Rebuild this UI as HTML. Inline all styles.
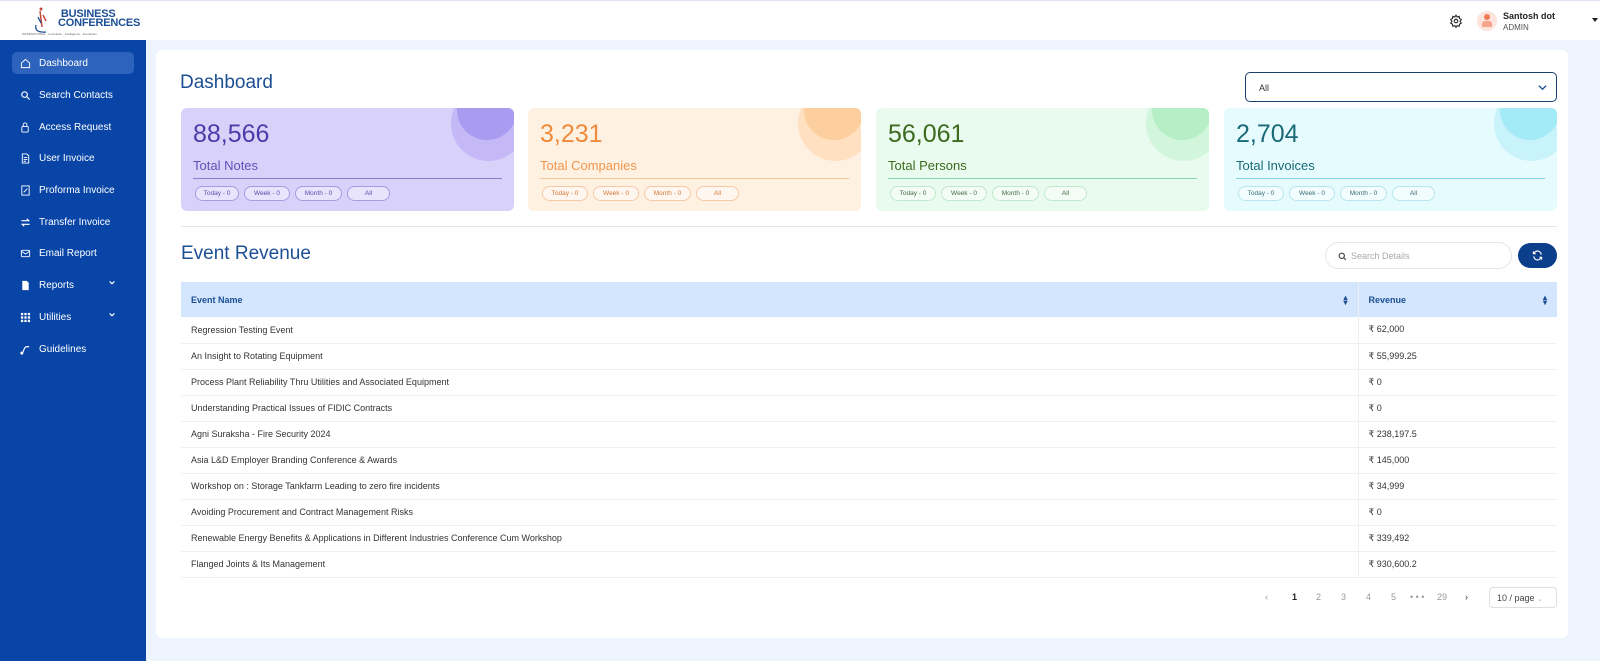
<!DOCTYPE html>
<html><head><meta charset="utf-8"><style>
*{box-sizing:border-box;margin:0;padding:0}
body{width:1600px;height:661px;overflow:hidden;font-family:"Liberation Sans",sans-serif;background:#eef4fd;position:relative}
.hdr{position:absolute;left:0;top:0;width:1600px;height:40px;background:#fff;border-top:1px solid #dde3ee}
.side{position:absolute;left:0;top:40px;width:146px;height:621px;background:#0845a6}
.nav{position:absolute;left:12px;width:122px;height:22px;color:#fff;font-size:10px;display:flex;align-items:center;padding-left:8px;border-radius:5px}
.nav svg{width:11px;height:11px;margin-right:8px;flex:none}
.nav.act{background:#2d63bd}
.nav .chev{position:absolute;right:10px;top:5px;width:8px;height:8px}
.card{position:absolute;left:156px;top:50px;width:1412px;height:588px;background:#fff;border-radius:6px}
.stat{position:absolute;top:108px;width:333px;height:103px;border-radius:6px;overflow:hidden}
.stat .num{position:absolute;left:12px;top:12px;font-size:25px}
.stat .lbl{position:absolute;left:12px;top:50px;font-size:13px}
.stat .ln{position:absolute;left:12px;right:12px;top:70px;height:1px}
.stat .circ{position:absolute;right:-12px;top:-22px;width:75px;height:75px;border-radius:50%}
.stat .circ2{position:absolute;right:-3px;top:-28px;width:60px;height:60px;border-radius:50%}
.pills{position:absolute;left:14px;top:78px;display:flex;gap:5px}
.pill{height:15px;border-radius:8px;font-size:6.5px;display:flex;align-items:center;justify-content:center;border:1px solid}
table{position:absolute;left:181px;top:282px;width:1376px;border-collapse:collapse;font-size:9px;color:#333}
th{background:#d4e6fd;height:35px;text-align:left;font-weight:bold;color:#1c4f94;padding-left:10px}
td{height:26px;padding-left:10px;border-bottom:1px solid #eef0f3}
td.r,th.r{border-left:1px solid #eef0f3}
.sort{float:right;margin-right:10px;color:#1c4f94;font-size:8px;line-height:5px}
</style></head><body>
<div class="hdr">
 <div style="position:absolute;left:28px;top:4px;width:30px;height:30px">
  <svg width="30" height="30" viewBox="0 0 30 30"><path d="M8 20 Q6 28 18 27" stroke="#1c4f94" stroke-width="1.3" fill="none"/><path d="M12 6 L14 22 M15 10 L18 16" stroke="#c24a3a" stroke-width="1.5" fill="none"/><circle cx="13" cy="4" r="1.5" fill="#c24a3a"/><path d="M10 12 L13 18" stroke="#1c4f94" stroke-width="1.3"/></svg>
 </div>
 <div style="position:absolute;left:58px;top:9px;font-weight:bold;color:#1c4f94;font-size:11px;line-height:9px;letter-spacing:-.2px">&nbsp;BUSINESS<br>CONFERENCES</div>
 <div style="position:absolute;left:22px;top:31px;font-size:3px;color:#666">INTERNATIONAL · Innovation · Intelligence · Interaction</div>
 <svg style="position:absolute;left:1449px;top:13px" width="14" height="14" viewBox="0 0 24 24" fill="none" stroke="#333" stroke-width="2"><circle cx="12" cy="12" r="3"/><path d="M12 2l2 3 3.5-1 .5 3.5 3 2-2 3 2 3-3 2-.5 3.5-3.5-1-2 3-2-3-3.5 1-.5-3.5-3-2 2-3-2-3 3-2 .5-3.5 3.5 1z"/></svg>
 <div style="position:absolute;left:1477px;top:10px;width:20px;height:20px;border-radius:50%;background:#fde4dc"></div>
 <div style="position:absolute;left:1484px;top:13px;width:6px;height:6px;border-radius:50%;background:#f07a55"></div>
 <div style="position:absolute;left:1482px;top:20px;width:10px;height:6px;border-radius:3px 3px 0 0;background:#f5a48a"></div>
 <div style="position:absolute;left:1503px;top:10px;font-size:9px;font-weight:bold;color:#222">Santosh dot</div>
 <div style="position:absolute;left:1503px;top:22px;font-size:8px;color:#555">ADMIN</div>
 <div style="position:absolute;left:1592px;top:17px;border:3px solid transparent;border-top:4px solid #222"></div>
</div>
<div class="side">
 <div class="nav act" style="top:12px"><svg viewBox="0 0 24 24" fill="none" stroke="#fff" stroke-width="2"><path d="M3 11l9-8 9 8v10H3z"/></svg>Dashboard</div>
 <div class="nav" style="top:44px"><svg viewBox="0 0 24 24" fill="none" stroke="#fff" stroke-width="2.5"><circle cx="10" cy="10" r="6"/><path d="M15 15l6 6"/></svg>Search Contacts</div>
 <div class="nav" style="top:76px"><svg viewBox="0 0 24 24" fill="none" stroke="#fff" stroke-width="2"><rect x="4" y="10" width="14" height="12" rx="2"/><path d="M7 10V6a4 4 0 018 0v4"/></svg>Access Request</div>
 <div class="nav" style="top:107px"><svg viewBox="0 0 24 24" fill="none" stroke="#fff" stroke-width="2"><path d="M5 2h10l4 4v16H5z M8 10h8M8 14h8M8 18h5"/></svg>User Invoice</div>
 <div class="nav" style="top:139px"><svg viewBox="0 0 24 24" fill="none" stroke="#fff" stroke-width="2"><rect x="4" y="2" width="16" height="20"/><path d="M8 16l8-8"/></svg>Proforma Invoice</div>
 <div class="nav" style="top:171px"><svg viewBox="0 0 24 24" fill="none" stroke="#fff" stroke-width="2.5"><path d="M3 8h16l-4-4M21 16H5l4 4"/></svg>Transfer Invoice</div>
 <div class="nav" style="top:202px"><svg viewBox="0 0 24 24" fill="none" stroke="#fff" stroke-width="2"><rect x="3" y="5" width="18" height="14" rx="2"/><path d="M3 7l9 6 9-6"/></svg>Email Report</div>
 <div class="nav" style="top:234px"><svg viewBox="0 0 24 24" fill="#fff"><path d="M5 2h10l4 4v16H5z"/></svg>Reports<svg class="chev" viewBox="0 0 10 10" fill="none" stroke="#fff" stroke-width="1.5"><path d="M2 3l3 3 3-3"/></svg></div>
 <div class="nav" style="top:266px"><svg viewBox="0 0 24 24" fill="#fff"><rect x="2" y="2" width="5" height="5"/><rect x="9.5" y="2" width="5" height="5"/><rect x="17" y="2" width="5" height="5"/><rect x="2" y="9.5" width="5" height="5"/><rect x="9.5" y="9.5" width="5" height="5"/><rect x="17" y="9.5" width="5" height="5"/><rect x="2" y="17" width="5" height="5"/><rect x="9.5" y="17" width="5" height="5"/><rect x="17" y="17" width="5" height="5"/></svg>Utilities<svg class="chev" viewBox="0 0 10 10" fill="none" stroke="#fff" stroke-width="1.5"><path d="M2 3l3 3 3-3"/></svg></div>
 <div class="nav" style="top:298px"><svg viewBox="0 0 24 24" fill="none" stroke="#fff" stroke-width="2.5"><path d="M4 20c4 0 4-14 10-14h6"/><circle cx="4" cy="20" r="2" fill="#fff"/></svg>Guidelines</div>
</div>
<div class="card"></div>
<div style="position:absolute;left:180px;top:72px;font-size:19px;color:#1c4f94">Dashboard</div>
<div style="position:absolute;left:1245px;top:72px;width:312px;height:30px;border:1px solid #1c3f6e;border-radius:5px;font-size:9px;color:#333;padding:10px 13px">All<svg style="position:absolute;right:9px;top:11px" width="9" height="7" viewBox="0 0 10 8" fill="none" stroke="#1c4f94" stroke-width="1.5"><path d="M1 2l4 4 4-4"/></svg></div>

<div class="stat" style="left:181px;background:#d8d2fb">
 <div class="circ" style="background:#c4b9f6"></div><div class="circ2" style="background:#a89bf0"></div>
 <div class="num" style="color:#4b3aa8">88,566</div><div class="lbl" style="color:#6152b8">Total Notes</div><div class="ln" style="background:#8a80c8"></div>
 <div class="pills" style="color:#5a4ea8"><div class="pill" style="width:44px;border-color:#a69ce0;background:#e8e4fd">Today - 0</div><div class="pill" style="width:46px;border-color:#a69ce0;background:#e8e4fd">Week - 0</div><div class="pill" style="width:47px;border-color:#a69ce0;background:#e8e4fd">Month - 0</div><div class="pill" style="width:43px;border-color:#a69ce0;background:#e8e4fd">All</div></div>
</div>
<div class="stat" style="left:528px;background:#fff1e2">
 <div class="circ" style="background:#ffe0c0"></div><div class="circ2" style="background:#fdcf9e"></div>
 <div class="num" style="color:#f08a3c">3,231</div><div class="lbl" style="color:#f0964f">Total Companies</div><div class="ln" style="background:#f5c49a"></div>
 <div class="pills" style="color:#d27a3c"><div class="pill" style="width:46px;border-color:#f5c9a5;background:#fff7ef">Today - 0</div><div class="pill" style="width:46px;border-color:#f5c9a5;background:#fff7ef">Week - 0</div><div class="pill" style="width:47px;border-color:#f5c9a5;background:#fff7ef">Month - 0</div><div class="pill" style="width:43px;border-color:#f5c9a5;background:#fff7ef">All</div></div>
</div>
<div class="stat" style="left:876px;background:#e9fbee">
 <div class="circ" style="background:#d2f6dc"></div><div class="circ2" style="background:#b6efc6"></div>
 <div class="num" style="color:#3d6a1e">56,061</div><div class="lbl" style="color:#3d6a1e">Total Persons</div><div class="ln" style="background:#88d6a8"></div>
 <div class="pills" style="color:#4a6a4a"><div class="pill" style="width:46px;border-color:#bfe9cc;background:#f3fdf6">Today - 0</div><div class="pill" style="width:46px;border-color:#bfe9cc;background:#f3fdf6">Week - 0</div><div class="pill" style="width:47px;border-color:#bfe9cc;background:#f3fdf6">Month - 0</div><div class="pill" style="width:43px;border-color:#bfe9cc;background:#f3fdf6">All</div></div>
</div>
<div class="stat" style="left:1224px;background:#e6fbfd">
 <div class="circ" style="background:#c9f3fa"></div><div class="circ2" style="background:#a3ebf7"></div>
 <div class="num" style="color:#1a6a78">2,704</div><div class="lbl" style="color:#1a6a78">Total Invoices</div><div class="ln" style="background:#7fd6e0"></div>
 <div class="pills" style="color:#3a6a78"><div class="pill" style="width:46px;border-color:#b6e7ef;background:#f2fdfe">Today - 0</div><div class="pill" style="width:46px;border-color:#b6e7ef;background:#f2fdfe">Week - 0</div><div class="pill" style="width:47px;border-color:#b6e7ef;background:#f2fdfe">Month - 0</div><div class="pill" style="width:43px;border-color:#b6e7ef;background:#f2fdfe">All</div></div>
</div>
<div style="position:absolute;left:181px;top:226px;width:1376px;height:1px;background:#e2e5ea"></div>
<div style="position:absolute;left:181px;top:243px;font-size:19px;color:#1c4f94">Event Revenue</div>
<div style="position:absolute;left:1325px;top:242px;width:187px;height:27px;border:1px solid #e3e6ea;border-radius:14px;font-size:9px;color:#aaa;padding:8px 0 0 25px">Search Details<svg style="position:absolute;left:12px;top:9px" width="9" height="9" viewBox="0 0 24 24" fill="none" stroke="#444" stroke-width="3"><circle cx="10" cy="10" r="7"/><path d="M15 15l6 6"/></svg></div>
<div style="position:absolute;left:1518px;top:243px;width:39px;height:25px;border-radius:13px;background:#0b3f8c"><svg style="position:absolute;left:14px;top:7px" width="11" height="11" viewBox="0 0 24 24" fill="none" stroke="#fff" stroke-width="2.5"><path d="M20 10A8 8 0 006 5L3 8M4 14a8 8 0 0014 5l3-3M3 3v5h5M21 21v-5h-5"/></svg></div>
<table>
<tr><th style="width:1177px">Event Name<span class="sort">▴<br>▾</span></th><th class="r">Revenue<span class="sort">▴<br>▾</span></th></tr>
<tr><td>Regression Testing Event</td><td class="r">₹ 62,000</td></tr>
<tr><td>An Insight to Rotating Equipment</td><td class="r">₹ 55,999.25</td></tr>
<tr><td>Process Plant Reliability Thru Utilities and Associated Equipment</td><td class="r">₹ 0</td></tr>
<tr><td>Understanding Practical Issues of FIDIC Contracts</td><td class="r">₹ 0</td></tr>
<tr><td>Agni Suraksha - Fire Security 2024</td><td class="r">₹ 238,197.5</td></tr>
<tr><td>Asia L&amp;D Employer Branding Conference &amp; Awards</td><td class="r">₹ 145,000</td></tr>
<tr><td>Workshop on : Storage Tankfarm Leading to zero fire incidents</td><td class="r">₹ 34,999</td></tr>
<tr><td>Avoiding Procurement and Contract Management Risks</td><td class="r">₹ 0</td></tr>
<tr><td>Renewable Energy Benefits &amp; Applications in Different Industries Conference Cum Workshop</td><td class="r">₹ 339,492</td></tr>
<tr><td>Flanged Joints &amp; Its Management</td><td class="r">₹ 930,600.2</td></tr>
</table>
<div style="position:absolute;top:592px;left:1265px;font-size:9px;color:#999;width:220px;height:12px">
 <span style="position:absolute;left:0">‹</span>
 <span style="position:absolute;left:27px;color:#222;font-weight:bold">1</span>
 <span style="position:absolute;left:51px">2</span>
 <span style="position:absolute;left:76px">3</span>
 <span style="position:absolute;left:101px">4</span>
 <span style="position:absolute;left:126px">5</span>
 <span style="position:absolute;left:145px">• • •</span>
 <span style="position:absolute;left:172px">29</span>
 <span style="position:absolute;left:200px;color:#333">›</span>
</div>
<div style="position:absolute;left:1489px;top:587px;width:68px;height:21px;border:1px solid #dcdfe4;border-radius:4px;font-size:9px;color:#444;padding:5px 0 0 7px">10 / page <span style="color:#bbb;font-size:7px">⌄</span></div>
</body></html>
